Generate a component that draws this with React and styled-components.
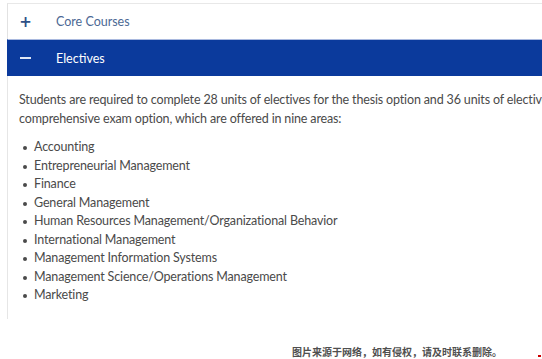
import React from "react";
import styled, { createGlobalStyle } from "styled-components";

const GlobalStyle = createGlobalStyle`
  html, body {
    margin: 0;
    padding: 0;
    background: #fff;
  }
  body {
    font-family: "Lato", "Open Sans", sans-serif;
  }
`;

const areas = [
  "Accounting",
  "Entrepreneurial Management",
  "Finance",
  "General Management",
  "Human Resources Management/Organizational Behavior",
  "International Management",
  "Management Information Systems",
  "Management Science/Operations Management",
  "Marketing",
];

const App = () => {
  return (
    <>
      <GlobalStyle />
      <Page>
        <Accordion>
          <Header>
            <Sign>+</Sign>
            <Title>Core Courses</Title>
          </Header>
          <Header $open>
            <Sign $open>
              <Dash />
            </Sign>
            <Title $open>Electives</Title>
          </Header>
          <Body>
            <Intro>
              Students are required to complete 28 units of electives for the thesis option and 36 units of electives for the
              <br />
              comprehensive exam option, which are offered in nine areas:
            </Intro>
            <List>
              {areas.map((a) => (
                <Item key={a}>{a}</Item>
              ))}
            </List>
          </Body>
        </Accordion>
        <Footer>
          <Notice>图片来源于网络，如有侵权，请及时联系删除。</Notice>
          <RedMark />
        </Footer>
      </Page>
    </>
  );
};

export default App;

const Page = styled.div`
  width: 542px;
  height: 359px;
  overflow: hidden;
  padding-top: 3px;
  box-sizing: border-box;
`;
const Accordion = styled.div`
  margin-left: 7px;
  width: 600px;
`;
const Header = styled.div`
  display: flex;
  align-items: center;
  height: ${(p) => (p.$open ? "37px" : "36px")};
  box-sizing: border-box;
  border-top: 1px solid ${(p) => (p.$open ? "#a9b9df" : "#e8e8e8")};
  border-left: 1px solid ${(p) => (p.$open ? "#0b3a9c" : "#e2e2e2")};
  background: ${(p) => (p.$open ? "#0b3a9c" : "#fff")};
`;
const Sign = styled.span`
  width: 48px;
  display: flex;
  justify-content: center;
  align-items: center;
  padding-right: 13px;
  box-sizing: border-box;
  font-family: "DejaVu Sans", sans-serif;
  font-weight: bold;
  font-size: 15px;
  color: #2e4f86;
`;
const Dash = styled.span`
  display: block;
  width: 11px;
  height: 2px;
  background: #dfe6f5;
`;
const Title = styled.span`
  font-size: 12.5px;
  color: ${(p) => (p.$open ? "#ffffff" : "#4c6894")};
`;
const Body = styled.div`
  border-left: 1px solid #e6e6e6;
  padding: 15px 0 0 11px;
  height: 243px;
  box-sizing: border-box;
  color: #4a4a4a;
  font-size: 12.5px;
  letter-spacing: -0.15px;
  line-height: 18.5px;
`;
const Intro = styled.p`
  margin: 0 0 10px;
  white-space: nowrap;
`;
const List = styled.ul`
  margin: 0;
  padding: 0;
  list-style: none;
`;
const Item = styled.li`
  position: relative;
  padding-left: 15px;
  white-space: nowrap;
  &::before {
    content: "";
    position: absolute;
    left: 4px;
    top: 8px;
    width: 4px;
    height: 4px;
    border-radius: 50%;
    background: #4a4a4a;
  }
`;
const Footer = styled.div`
  display: flex;
  justify-content: flex-end;
  align-items: flex-end;
  height: 39px;
  padding-right: 1px;
`;
const Notice = styled.span`
  margin-right: 36px;
  font-family: "Noto Sans CJK SC", sans-serif;
  font-weight: bold;
  font-size: 10px;
  line-height: 13px;
  color: #4f4f4f;
`;
const RedMark = styled.span`
  width: 3px;
  height: 2px;
  background: #c00;
  margin-bottom: 1px;
`;
